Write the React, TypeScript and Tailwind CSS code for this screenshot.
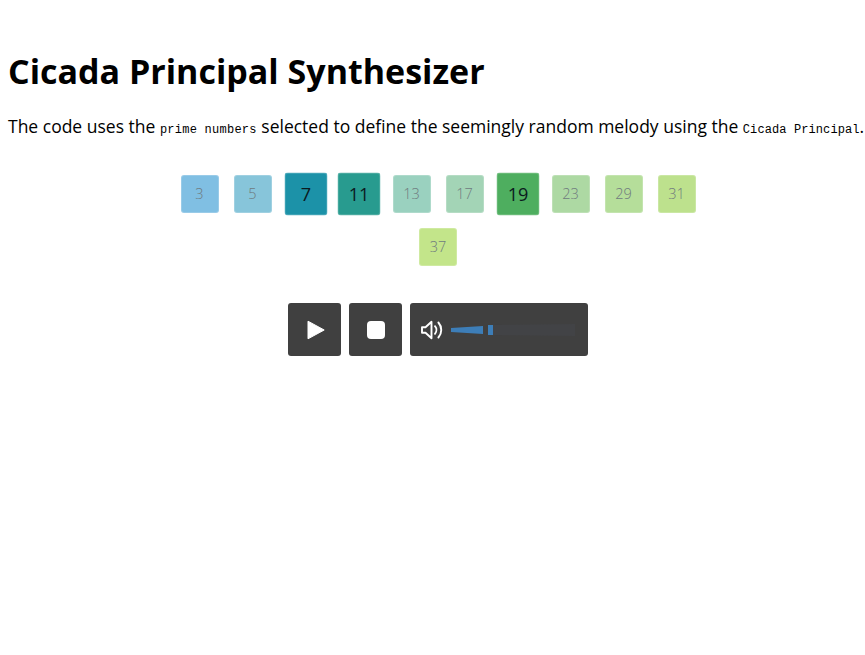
const tiles = [
  { n: 3, bg: "bg-[#80bfe3]" },
  { n: 5, bg: "bg-[#87c5da]" },
  { n: 7, bg: "bg-[#1c92a8]", active: true },
  { n: 11, bg: "bg-[#289b8f]", active: true },
  { n: 13, bg: "bg-[#9ad1bf]" },
  { n: 17, bg: "bg-[#a3d4b6]" },
  { n: 19, bg: "bg-[#4eae5f]", active: true },
  { n: 23, bg: "bg-[#add9a3]" },
  { n: 29, bg: "bg-[#b5de9a]" },
  { n: 31, bg: "bg-[#bde18d]" },
  { n: 37, bg: "bg-[#c3e58a]" },
];

export default function App() {
  return (
    <div className="h-[655px] w-[865px] overflow-hidden bg-white font-['Open_Sans',sans-serif] text-black">
      <div className="ml-2 w-[860px] pt-[48px]">
        <h1 className="whitespace-nowrap text-[34px] leading-[46px] font-bold">Cicada Principal Synthesizer</h1>
        <p className="mt-[20px] whitespace-nowrap text-[17.5px] leading-[24px]">
          The code uses the <code className="font-['Liberation_Mono',monospace] text-[12px] tracking-[0.25px]">prime numbers</code> selected to define the seemingly random melody using the <code className="font-['Liberation_Mono',monospace] text-[12px] tracking-[0.1px]">Cicada Principal</code>.
        </p>
        <div className="mx-auto mt-[33px] flex w-[540px] flex-wrap justify-center">
          {tiles.map((t) => (
            <div
              key={t.n}
              className={`mx-[7.5px] mb-[15px] flex h-[38px] w-[38px] items-center justify-center rounded-[3px] border border-white/20 ${t.bg} ${t.active ? "scale-[1.13] text-[16px] text-[#0b1a1e]" : "text-[14.5px] font-light text-[#6f7a7e]"}`}
            >
              {t.n}
            </div>
          ))}
        </div>
        <div className="mt-[22px] flex justify-center gap-2">
          <button className="flex h-[53px] w-[53px] items-center justify-center rounded-[3px] bg-[#404040]">
            <svg className="ml-[2px]" width="18" height="20" viewBox="0 0 18 20"><path d="M1 1.2 17.2 10 1 18.8Z" fill="#fff" stroke="#fff" strokeLinejoin="round" /></svg>
          </button>
          <button className="flex h-[53px] w-[53px] items-center justify-center rounded-[3px] bg-[#404040]">
            <div className="h-[18px] w-[18px] rounded-[4px] bg-white" />
          </button>
          <div className="flex h-[53px] w-[178px] items-center rounded-[3px] bg-[#404040] pl-[10px]">
            <svg width="24" height="22" viewBox="0 0 24 22" fill="none" stroke="#fff" strokeWidth="1.9" strokeLinejoin="round" strokeLinecap="round">
              <path d="M2 8.3H5.5L11.5 2.8V19.2L5.5 13.7H2Z" />
              <path d="M15 7.2C16.8 9.3 16.8 12.7 15 14.8" />
              <path d="M18.4 3.5C22.2 7.8 22.2 14.2 18.4 18.5" />
            </svg>
            <svg className="ml-[7px]" width="130" height="14" viewBox="0 0 130 14">
              <path d="M0 5 32 3V11L0 9Z" fill="#3d7eb8" />
              <path d="M42 2 124 1V13L42 12Z" fill="#424346" />
              <rect x="37" y="2" width="5" height="10" fill="#3d7eb8" />
            </svg>
          </div>
        </div>
      </div>
    </div>
  );
}
